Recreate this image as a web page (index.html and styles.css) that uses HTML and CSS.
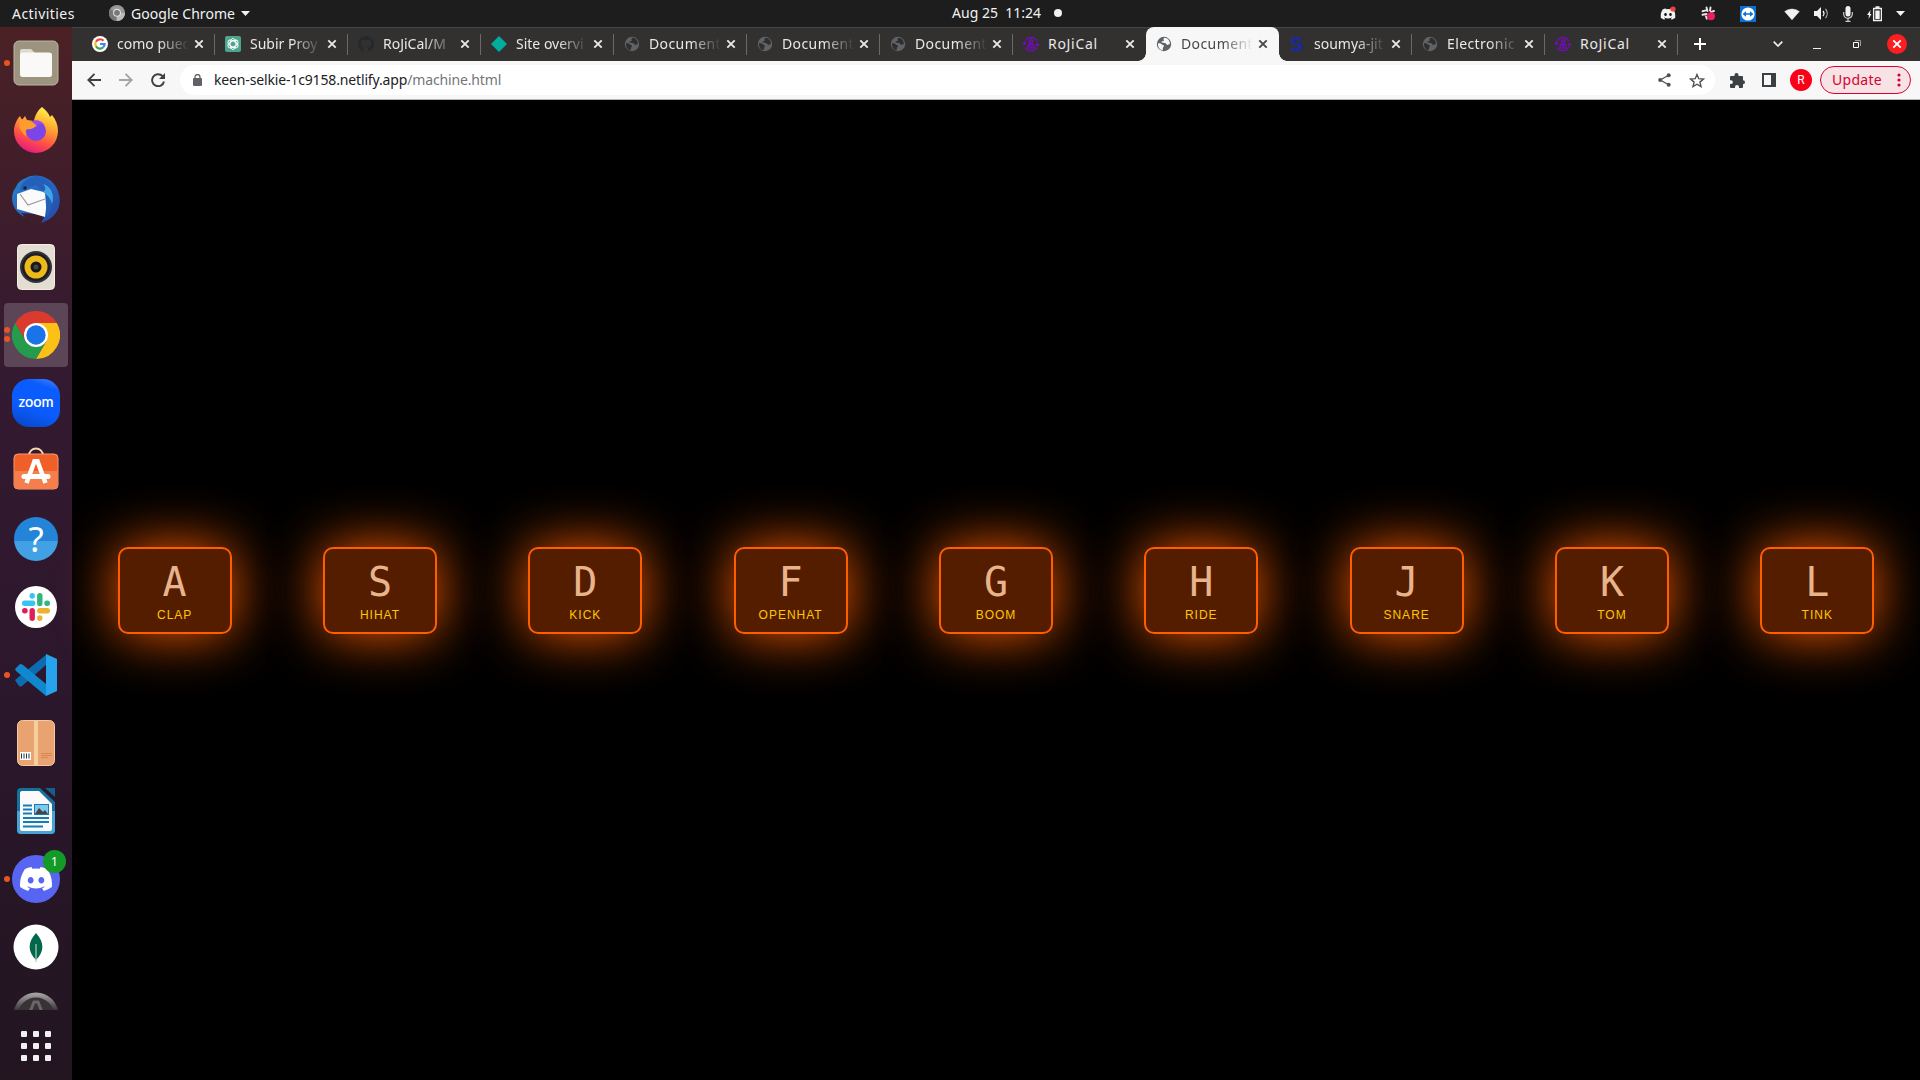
FILE: index.html
```html
<!DOCTYPE html>
<html lang="en">
<head>
<meta charset="utf-8">
<title>Drum machine</title>
<link rel="stylesheet" href="styles.css">
</head>
<body>
<svg class="defs" width="0" height="0">
  <defs>
    <symbol id="globe" viewBox="0 0 16 16"><circle cx="8" cy="8" r="7.200" fill="#5f6368"/><path class="land" d="M2 7.200c1.600-.2 3 .2 3.600 1 .8.9 2.100.5 2.300 1.500.2 1-1 1.300-1.100 2.500v2C3.900 14.100 1.700 11.500 2 7.200zM8.500 1.800c-1 .5-1.300 1.500-.7 2.200.6.6-.6 1.400-1.500 1.200-.9-.2-1 .9-.3 1.300 1 .6 2.200.2 3.200.6 1 .5 1 1.700 2 1.800.9.100 1.300-.7 2.600-.7.400-3.400-2-6.200-5.300-6.400z"/></symbol>
    <symbol id="x" viewBox="0 0 10 10"><path d="M1.300 1.300l7.400 7.400M8.700 1.300L1.300 8.700" stroke="currentColor" stroke-width="1.900" fill="none"/></symbol>
    <symbol id="roji" viewBox="0 0 16 16"><g fill="none" stroke="#8300d8" stroke-width="1.200"><path d="M2.300 4.800A6.600 6.600 0 0 1 13.700 4.800M13.700 11.500A6.600 6.600 0 0 1 2.300 11.500M1.200 9V6.500M14.800 7v2.500M0 8l1.200-1.800L3 8M13 8l1.800 1.800L16 8"/><circle cx="8" cy="5.500" r="1.700"/><path d="M5 12V10.500a3 2.200 0 0 1 6 0V12zM8 10v2"/></g></symbol>
    <symbol id="discord" viewBox="0 0 24 18"><path fill="currentColor" d="M20.300 1.500A20 20 0 0 0 15.400 0l-.7 1.300a18 18 0 0 0-5.400 0L8.600 0a20 20 0 0 0-4.900 1.500C.6 6.100-.3 10.600.1 15a20 20 0 0 0 6 3l1.300-2-2-1 .5-.4a14 14 0 0 0 12.200 0l.5.4-2 1 1.300 2a20 20 0 0 0 6-3c.5-5.100-.8-9.600-3.600-13.500zM8 12.300c-1.200 0-2.200-1.100-2.200-2.400s1-2.400 2.200-2.400 2.200 1.100 2.200 2.400-1 2.400-2.200 2.400zm8 0c-1.200 0-2.200-1.100-2.200-2.400s1-2.400 2.200-2.400 2.200 1.100 2.200 2.400-1 2.400-2.200 2.400z"/></symbol>
  </defs>
</svg>

<header class="topbar">
  <div class="topbar-left">
    <span class="activities">Activities</span>
    <svg class="app-icon" width="16" height="16" viewBox="0 0 16 16"><circle cx="8" cy="8" r="8" fill="#999"/><path d="M8 8L1 4a8 8 0 0 0 6 12z" fill="#777"/><path d="M8 8h8a8 8 0 0 1-8 8z" fill="#bbb"/><circle cx="8" cy="7.800" r="4" fill="#ddd"/><circle cx="8" cy="7.800" r="2.900" fill="#777"/></svg>
    <span class="app-name">Google Chrome</span>
    <svg width="9" height="5" viewBox="0 0 9 5"><path d="M0 0h9L4.500 5z" fill="#f2f2f2"/></svg>
  </div>
  <div class="clock"><span>Aug 25&nbsp; 11:24</span><i></i></div>
  <div class="tray">
    <svg width="17" height="15" viewBox="0 0 17 15"><g color="#f2f2f2"><use href="#discord" x="0.500" y="2" width="15" height="12"/></g><circle cx="13" cy="3" r="2.600" fill="#ed4245"/></svg>
    <svg width="15" height="15" viewBox="0 0 15 15"><g stroke="#e8e8e8" stroke-width="1.900" stroke-linecap="round"><path d="M5.500 1.500l1 3.500M9.500 1.500L9 4.500M1.500 5.200l3.500-.8M1.500 8.800L5.500 8M5 10.500l.8 2.200M10 5.800l3-.8"/></g><circle cx="10" cy="10.300" r="4" fill="#ec1e63"/></svg>
    <svg width="16" height="16" viewBox="0 0 16 16"><path fill="#0d6fd0" d="M0 0h16v16H0z"/><circle cx="8" cy="8" r="6.600" fill="#fff"/><path fill="#0d6fd0" d="M2.500 8l3.500-2.700v1.900h4V5.300L13.500 8 10 10.700V8.800H6v1.900z"/></svg>
    <svg class="wifi" width="16" height="12" viewBox="0 0 16 12"><path fill="#888" d="M0 3.500a12 12 0 0 1 16 0L8 12z"/><path fill="#f2f2f2" d="M.8 3.600a11 11 0 0 1 14.400 0L8 12z"/></svg>
    <svg width="15" height="13" viewBox="0 0 15 13"><path fill="#f2f2f2" d="M0 4h3l4-4v13L3 9H0z"/><path d="M9 4a4 4 0 0 1 0 5" stroke="#f2f2f2" stroke-width="1.300" fill="none"/><path d="M11.500 1.800a7.500 7.500 0 0 1 0 9.400" stroke="#aaa" stroke-width="1.300" fill="none"/></svg>
    <svg width="10" height="16" viewBox="0 0 10 16"><rect x="2.500" width="5" height="10.500" rx="2.500" fill="#f2f2f2"/><path d="M.7 6v2a4.300 4.300 0 0 0 8.600 0V6M5 12v4M2.500 15.400h5" stroke="#ccc" stroke-width="1.200" fill="none"/></svg>
    <svg width="15" height="16" viewBox="0 0 15 16"><path fill="#f2f2f2" d="M3.500 4L0 9h2l-.5 4L4.500 8H3z"/><path d="M6.600 2.500h7.800v12H6.600zM8.500 1h4" fill="none" stroke="#f2f2f2" stroke-width="1.300"/><path fill="#f2f2f2" d="M8.300 4.500h4.400v8.500H8.300z"/></svg>
    <svg width="9" height="5" viewBox="0 0 9 5"><path d="M0 0h9L4.500 5z" fill="#f2f2f2"/></svg>
  </div>
</header>

<div class="desktop">
  <nav class="dock">
    <div class="app running">
      <svg width="46" height="46" viewBox="0 0 46 46"><rect x="1" y="1" width="44" height="44" rx="5" fill="#9c947f" stroke="#bbb5a3"/><path d="M7 11q0-2 2-2h9l4 4h15q2 0 2 2v19q0 3-3 3H10q-3 0-3-3z" fill="#ddd9ce"/><rect x="7" y="12.500" width="32" height="24.500" rx="3" fill="#faf9f7"/></svg>
    </div>
    <div class="app">
      <svg class="lift" width="46" height="47" viewBox="0 0 46 47"><defs><linearGradient id="ff" x1=".7" y1="0" x2=".3" y2="1"><stop offset="0" stop-color="#fff44f"/><stop offset=".35" stop-color="#ffa930"/><stop offset=".7" stop-color="#ff4f45"/><stop offset="1" stop-color="#e31587"/></linearGradient></defs><path fill="url(#ff)" d="M29 1c4 3 7 7 8 10l2-2c4 5 6 10 6 16a22 22 0 0 1-44 0c0-6 3-12 6-15l2 4 3-4 2 4 7 1c1-6 4-11 8-14z"/><circle cx="23" cy="25" r="10" fill="#7a46e8"/><path fill="#9d4be6" d="M18 16c5-4 12-1 14 4-4-3-7-2-9 0z"/><path fill="#ff9c2e" d="M7 14c4-3 8 1 11 2 3 0 4 3 6 4-3 1-5 4-9 3-3 0-3 4-1 8C7 26 5 19 7 14z"/></svg>
    </div>
    <div class="app">
      <svg width="48" height="48" viewBox="0 0 48 48"><defs><linearGradient id="tb" x1="0" x2="1" y2="1"><stop offset="0" stop-color="#2685cf"/><stop offset="1" stop-color="#2745a8"/></linearGradient></defs><path fill="url(#tb)" d="M14 3C23-2 35 1 42 9c7 9 8 22 1 30-4 5-9 7-14 9l4-7c-9-3-18-2-24-3l4 4C-1 36-3 20 4 12c2-5 5-7 10-9z"/><path fill="#fafafa" d="M5 19l14-5 17 4-3 24-28-8z"/><path fill="#245fba" d="M33 18l-9-8-16 6c1-9 9-15 18-15 9 2 15 9 15 19 0 8-2 16-6 22z"/><path d="M8 19l8 11 17-6" fill="none" stroke="#999" stroke-width="1.200"/><path fill="#3fa4e4" d="M31 9c8 2 12 11 9 20-1-4-3-8-9-12 3-2 3-5 0-8z"/><circle cx="13" cy="13" r="1.800" fill="#222"/></svg>
    </div>
    <div class="app">
      <svg width="38" height="46" viewBox="0 0 38 46"><rect x=".5" y=".5" width="37" height="45" rx="4" fill="#e3ddd2" stroke="#f2eee7"/><circle cx="19" cy="23" r="16" fill="#33333d"/><circle cx="19" cy="23" r="14" fill="#1d1d24"/><circle cx="19" cy="23" r="11.500" fill="#edba19"/><circle cx="19" cy="23" r="5.500" fill="#18181b"/><circle cx="19" cy="23" r="2.500" fill="#444"/></svg>
    </div>
    <div class="app running two active">
      <svg width="48" height="48" viewBox="0 0 48 48"><path fill="#db3a2e" d="M3.200 12A24 24 0 0 1 44.800 12H24L13.600 30z"/><path fill="#fbc116" d="M44.800 12A24 24 0 0 1 24 48l10.400-18L24 12z"/><path fill="#269a4d" d="M3.200 12A24 24 0 0 0 24 48l10.400-18H13.600z"/><circle cx="24" cy="24" r="12" fill="#fff"/><circle cx="24" cy="24" r="9.700" fill="#1a73e8"/></svg>
    </div>
    <div class="app"><div class="zoom">zoom</div></div>
    <div class="app">
      <svg class="bag" width="46" height="43" viewBox="0 0 46 43"><path d="M16 9c0-10 14-10 14 0" fill="none" stroke="#f3d6ac" stroke-width="2"/><rect x="1" y="7" width="44" height="35" rx="4" fill="#f15f28" stroke="#f99a70"/><path fill="#f57e4c" d="M1.500 24h43v14q0 3.500-3 3.500h-37q-3 0-3-3.500z"/><path d="M22 13L13.500 36M24 13l8.500 23" stroke="#fff" stroke-width="4.500"/><path d="M11 29.500h24" stroke="#fff" stroke-width="5" stroke-linecap="round"/><path fill="#fff" d="M20 12h6l1 4h-8z"/></svg>
    </div>
    <div class="app"><div class="help">?</div></div>
    <div class="app">
      <svg width="42" height="42" viewBox="0 0 42 42"><circle cx="21" cy="21" r="21" fill="#fff"/><g stroke-width="5.400" stroke-linecap="round"><path stroke="#36c5f0" d="M9.700 17.200h8M17.200 9.700v.3"/><path stroke="#2eb67d" d="M24.800 9.700v7.800M32.300 17.200H32"/><path stroke="#ecb22e" d="M24.800 24.800h7.500M24.800 32.300V32"/><path stroke="#e01e5a" d="M17.200 24.800v7.500M9.700 24.800h.3"/></g></svg>
    </div>
    <div class="app running">
      <svg width="42" height="42" viewBox="0 0 42 42"><path fill="#0d6cb0" d="M0 26l4 6q2 1 3 0l25-22V0L0 26z"/><path fill="#0f88d0" d="M0 15l5-5q2 0 3 1l23 19v12L1 17z"/><path fill="#27a3ee" d="M31 0l11 5v32l-11 5z"/></svg>
    </div>
    <div class="app">
      <svg width="38" height="46" viewBox="0 0 38 46"><rect x=".5" y=".5" width="37" height="45" rx="5" fill="#e9a370" stroke="#f5caa3"/><path fill="#f3cf9d" d="M17 1h4v44h-4z"/><path fill="#fff" d="M3 32h11v8H3z"/><path d="M4.500 33.500v5M7 33.500v5M9.500 33.500v5M12 33.500v5" stroke="#333"/><path d="M24 33.500h11M24 35.500h11M24 37.500h7" stroke="#d4824c" stroke-width=".8"/></svg>
    </div>
    <div class="app">
      <svg width="38" height="46" viewBox="0 0 38 46"><path fill="#156f9f" d="M4 0h19l15 14v28q0 4-4 4H4q-4 0-4-4V4q0-4 4-4z"/><path fill="#47a5d5" d="M0 23h38v19q0 4-4 4H4q-4 0-4-4z"/><path fill="#fafafa" d="M5 3h17l13 13v25q0 2-2 2H5q-2 0-2-2V5q0-2 2-2z"/><path fill="#145f8c" d="M28 0h10v9z"/><path d="M6 17.500h9M6 21.500h9M6 25.500h9M6 30h26M6 34h26M6 38.500h20" stroke="#157cb5" stroke-width="1.800"/><path fill="#157cb5" d="M17 16h15v11H17z"/><path fill="#80c8ee" d="M18 17h13v9H18z"/><path fill="#444" d="M18 26l4-6 4 4 2-2 3 4z"/></svg>
    </div>
    <div class="app running">
      <div class="discord-badge"><svg width="32" height="24"><use href="#discord"/></svg></div>
      <span class="count">1</span>
    </div>
    <div class="app">
      <svg width="46" height="46" viewBox="0 0 46 46"><circle cx="23" cy="23" r="22.500" fill="#fff"/><path fill="#00684a" d="M23 9c9 10 8 19 0 27-8-8-9-17 0-27z"/><path d="M23 20v18" stroke="#b8c9bc" stroke-width="1.200"/></svg>
    </div>
    <div class="app clipped">
      <svg width="46" height="18" viewBox="0 0 46 18"><defs><linearGradient id="fd" x2="0" y2="1"><stop offset="0" stop-color="#aaa"/><stop offset=".4" stop-color="#3a3337"/></linearGradient></defs><circle cx="23" cy="23" r="22.500" fill="url(#fd)"/><circle cx="23" cy="24" r="18.500" fill="#383236"/><path d="M17 20l4-10h4l4 10" fill="none" stroke="#6a6568" stroke-width="3"/></svg>
    </div>
    <div class="show-apps"><i></i><i></i><i></i><i></i><i></i><i></i><i></i><i></i><i></i></div>
  </nav>

  <section class="browser">
    <div class="tabs">
      <div class="tab"><svg class="fav" viewBox="0 0 16 16"><circle cx="8" cy="8" r="8" fill="#fff"/><g fill="none" stroke-width="2.200"><path stroke="#ea4335" d="M3.900 5.700A4.700 4.700 0 0 1 11.500 4.800"/><path stroke="#fbbc05" d="M3.900 5.700a4.700 4.700 0 0 0 0 4.600"/><path stroke="#34a853" d="M3.900 10.300a4.700 4.700 0 0 0 7.300 1"/><path stroke="#4285f4" d="M11.200 11.300A4.700 4.700 0 0 0 12.600 8H8"/></g></svg><span>como pued</span><svg class="close"><use href="#x"/></svg></div>
      <div class="tab"><svg class="fav" viewBox="0 0 16 16"><rect width="16" height="16" rx="2" fill="#4fa58c"/><g fill="none" stroke="#fff" stroke-width=".9"><ellipse cx="8" cy="8" rx="2.900" ry="5.500"/><ellipse cx="8" cy="8" rx="2.900" ry="5.500" transform="rotate(60 8 8)"/><ellipse cx="8" cy="8" rx="2.900" ry="5.500" transform="rotate(120 8 8)"/></g></svg><span>Subir Proy</span><svg class="close"><use href="#x"/></svg></div>
      <div class="tab"><svg class="fav" viewBox="0 0 16 16"><path fill="#24292f" d="M8 0C3.580 0 0 3.580 0 8c0 3.540 2.290 6.530 5.470 7.590.4.070.55-.17.55-.38v-1.490c-2.010.37-2.530-.49-2.690-.94-.09-.23-.48-.94-.82-1.130-.28-.15-.68-.52-.01-.53.63-.01 1.080.58 1.230.82.72 1.210 1.870.87 2.330.66.070-.52.280-.87.510-1.070-1.780-.2-3.640-.89-3.640-3.950 0-.87.310-1.590.82-2.150-.08-.2-.36-1.020.08-2.120 0 0 .67-.21 2.200.82a7.600 7.600 0 0 1 4 0c1.530-1.040 2.200-.82 2.200-.82.440 1.100.160 1.920.080 2.120.510.560.820 1.270.820 2.150 0 3.070-1.870 3.750-3.650 3.950.290.250.540.730.540 1.480v2.200c0 .21.150.460.550.380A8 8 0 0 0 8 0z"/></svg><span>RoJiCal/M</span><svg class="close"><use href="#x"/></svg></div>
      <div class="tab"><svg class="fav" viewBox="0 0 16 16"><path fill="#00ad9f" d="M8 0l8 8-8 8-8-8z"/></svg><span>Site overvi</span><svg class="close"><use href="#x"/></svg></div>
      <div class="tab"><svg class="fav"><use href="#globe"/></svg><span class="wide">Document</span><svg class="close"><use href="#x"/></svg></div>
      <div class="tab"><svg class="fav"><use href="#globe"/></svg><span class="wide">Document</span><svg class="close"><use href="#x"/></svg></div>
      <div class="tab"><svg class="fav"><use href="#globe"/></svg><span class="wide">Document</span><svg class="close"><use href="#x"/></svg></div>
      <div class="tab before"><svg class="fav"><use href="#roji"/></svg><span class="short">RoJiCal</span><svg class="close"><use href="#x"/></svg></div>
      <div class="tab selected"><svg class="fav"><use href="#globe"/></svg><span class="wide">Document</span><svg class="close"><use href="#x"/></svg></div>
      <div class="tab"><b class="fav s">S</b><span>soumya-jit</span><svg class="close"><use href="#x"/></svg></div>
      <div class="tab"><svg class="fav"><use href="#globe"/></svg><span class="wide">Electronic</span><svg class="close"><use href="#x"/></svg></div>
      <div class="tab"><svg class="fav"><use href="#roji"/></svg><span class="short">RoJiCal</span><svg class="close"><use href="#x"/></svg></div>
      <svg class="new" width="12" height="12" viewBox="0 0 12 12"><path d="M6 0v12M0 6h12" stroke="#fff" stroke-width="2"/></svg>
      <div class="window">
        <svg width="10" height="6" viewBox="0 0 10 6"><path d="M.7.700L5 5 9.300.700" fill="none" stroke="#eee" stroke-width="1.700"/></svg>
        <svg width="8" height="6" viewBox="0 0 8 6"><path d="M0 5.500h8" stroke="#eee"/></svg>
        <svg width="8" height="8" viewBox="0 0 8 8"><path d="M.5 2.500h5v5h-5z" fill="none" stroke="#fff"/><path d="M2 .5h5.500V6" fill="none" stroke="#999"/></svg>
        <div class="quit"><svg width="10" height="10"><use href="#x"/></svg></div>
      </div>
    </div>

    <div class="toolbar">
      <div class="nav">
        <svg width="14" height="14" viewBox="0 0 14 14"><path d="M14 7H1.500M7.500.800L1.300 7l6.200 6.200" fill="none" stroke="#3c4043" stroke-width="1.900"/></svg>
        <svg width="14" height="14" viewBox="0 0 14 14"><path d="M0 7h12.500M6.500.800L12.700 7l-6.200 6.200" fill="none" stroke="#a5a5a7" stroke-width="1.900"/></svg>
        <svg width="14" height="14" viewBox="0 0 14 14"><path d="M11.600 3.200A6 6 0 1 0 13 8.500" fill="none" stroke="#3c4043" stroke-width="1.900"/><path fill="#3c4043" d="M14 0v6H8z"/></svg>
      </div>
      <div class="omnibox">
        <svg width="9" height="12" viewBox="0 0 9 12"><rect y="4" width="9" height="8" rx="1" fill="#5f6368"/><path d="M2 5V3a2.500 2.500 0 0 1 5 0v2" fill="none" stroke="#5f6368" stroke-width="1.300"/></svg>
        <span class="url">keen-selkie-1c9158.netlify.app<em>/machine.html</em></span>
        <svg class="share" width="13" height="14" viewBox="0 0 13 14"><path d="M10.700 2.200L2.200 7l8.500 4.800" fill="none" stroke="#505356" stroke-width="1.300"/><g fill="#505356"><circle cx="10.700" cy="2.200" r="2"/><circle cx="2.200" cy="7" r="2"/><circle cx="10.700" cy="11.800" r="2"/></g></svg>
        <svg width="16" height="15" viewBox="0 0 16 15"><path d="M8 1.500l1.800 4.200 4.600.4-3.500 3 1.100 4.500-4-2.400-4 2.400 1.100-4.500-3.500-3 4.600-.4z" fill="none" stroke="#505356" stroke-width="1.400"/></svg>
      </div>
      <svg class="puzzle" width="15" height="15" viewBox="0 0 15 15"><path fill="#3c4043" d="M0 4q0-1 1-1h3.500V2a2 2 0 0 1 4 0v1H12q1 0 1 1v3.200a2 2 0 0 1 0 4V14q0 1-1 1H9v-1a2 2 0 0 0-4 0v1H1q-1 0-1-1v-3h1a1.900 1.900 0 0 0 0-3.800H0z"/></svg>
      <svg class="panel" width="14" height="14" viewBox="0 0 14 14"><path d="M1 1h12v12H1z" fill="none" stroke="#3c4043" stroke-width="2"/><path fill="#3c4043" d="M9 1h4v12H9z"/></svg>
      <div class="avatar">R</div>
      <div class="update"><span>Update</span><svg width="4" height="14" viewBox="0 0 4 14"><g fill="#d9002f"><circle cx="2" cy="2" r="1.600"/><circle cx="2" cy="7" r="1.600"/><circle cx="2" cy="12" r="1.600"/></g></svg></div>
    </div>

    <main class="keys">
      <div class="key"><kbd>A</kbd><span>clap</span></div>
      <div class="key"><kbd>S</kbd><span>hihat</span></div>
      <div class="key"><kbd>D</kbd><span>kick</span></div>
      <div class="key"><kbd>F</kbd><span>openhat</span></div>
      <div class="key"><kbd>G</kbd><span>boom</span></div>
      <div class="key"><kbd>H</kbd><span>ride</span></div>
      <div class="key"><kbd>J</kbd><span>snare</span></div>
      <div class="key"><kbd>K</kbd><span>tom</span></div>
      <div class="key"><kbd>L</kbd><span>tink</span></div>
    </main>
  </section>
</div>
</body>
</html>
```
FILE: styles.css
```css
* { box-sizing: border-box; }
body {
  margin: 0;
  width: 1920px;
  height: 1080px;
  overflow: hidden;
  display: flex;
  flex-direction: column;
  background: #000;
  font-family: "Noto Sans", "Open Sans", sans-serif;
  font-size: 14px;
}
svg { display: block; flex: none; }
.defs { position: absolute; }
.topbar {
  flex: none;
  height: 27px;
  background: #1d1d1d;
  color: #f2f2f2;
  display: grid;
  grid-template-columns: 1fr auto 1fr;
  align-items: center;
}
.topbar-left { display: flex; align-items: center; padding: 0 0 1px 12px; }
.activities { width: 97px; letter-spacing: .45px; }
.app-name { margin: 0 5px 0 6px; width: 105px; white-space: nowrap; letter-spacing: .05px; }
.clock { display: flex; align-items: center; gap: 13px; padding: 0 0 2px 94px; }
.clock i { width: 8px; height: 8px; border-radius: 50%; background: #f2f2f2; }
.tray { display: flex; align-items: center; justify-content: flex-end; gap: 14px; padding-right: 15px; }
.tray svg:nth-child(1) { margin-right: 10px; }
.tray svg:nth-child(2) { margin-right: 10px; }
.tray .wifi { margin-left: 14px; }
.desktop { flex: 1; display: flex; min-height: 0; }

.dock {
  width: 72px;
  flex: none;
  background: linear-gradient(#4b2125, #351a30 30%, #2b172c 65%, #221520);
  display: flex;
  flex-direction: column;
  align-items: center;
  padding-top: 4px;
}
.app {
  width: 64px;
  height: 64px;
  flex: none;
  margin-bottom: 4px;
  border-radius: 4px;
  display: flex;
  align-items: center;
  justify-content: center;
  position: relative;
}
.lift { margin-bottom: 3px; }
.bag { margin-bottom: 6px; }
.app.active { background: #5b4557; }
.app.running::before {
  content: "";
  position: absolute;
  left: 0;
  top: 29px;
  width: 6px;
  height: 6px;
  border-radius: 50%;
  background: #e95420;
}
.app.two::before { top: 24px; box-shadow: 0 9px #e95420; }
.zoom {
  width: 48px;
  height: 48px;
  border-radius: 17px;
  background: linear-gradient(20deg, #0845c0, #0b5cff 40%, #0b5cff 80%, #4a86ff);
  color: #fff;
  font: 600 14.500px/46px Lato, sans-serif;
  text-align: center;
}
.help {
  width: 44px;
  height: 44px;
  border-radius: 50%;
  background: linear-gradient(#2384d8 54%, #41a1e4 54%);
  color: #fff;
  font-size: 35px;
  line-height: 43px;
  text-align: center;
}
.discord-badge {
  width: 48px;
  height: 48px;
  border-radius: 50%;
  background: #5865f2;
  color: #fff;
  display: flex;
  align-items: center;
  justify-content: center;
}
.count {
  position: absolute;
  left: 39px;
  top: 3px;
  width: 23px;
  height: 23px;
  border-radius: 50%;
  background: #149a26;
  color: #fff;
  font-size: 12px;
  line-height: 23px;
  text-align: center;
}
.app.clipped { height: 18px; margin: 9px 0 0; }
.show-apps { display: grid; grid-template-columns: repeat(3, 6px); gap: 6px; margin-top: 21px; }
.show-apps i { height: 6px; border-radius: 1px; background: #f2f0f0; }

.browser { flex: 1; min-width: 0; display: flex; flex-direction: column; }
.tabs {
  height: 34px;
  flex: none;
  display: flex;
  align-items: center;
  background: #333130;
  border-top: 1px solid #484644;
  padding-left: 10px;
}
.tab {
  --land: #302f2e;
  width: 133px;
  height: 33px;
  flex: none;
  display: flex;
  align-items: center;
  padding: 0 0 1px 10px;
  color: #e8e8e8;
  position: relative;
}
.tab::after {
  content: "";
  position: absolute;
  right: 0;
  top: 6px;
  width: 1px;
  height: 21px;
  background: #6a6968;
}
.tab.before::after { display: none; }
.fav { width: 16px; height: 16px; flex: none; }
.land { fill: var(--land); }
.s { color: #1a2a9c; font: 900 20px/16px "DejaVu Sans", sans-serif; text-align: center; }
.tab span {
  width: 76px;
  margin: 0 1px 0 9px;
  white-space: nowrap;
  line-height: 20px;
  -webkit-mask-image: linear-gradient(90deg, #000 42px, transparent 72px);
  mask-image: linear-gradient(90deg, #000 42px, transparent 72px);
}
.tab .wide { letter-spacing: .4px; }
.tab .short { letter-spacing: .7px; -webkit-mask-image: none; mask-image: none; }
.close { width: 10px; height: 10px; }
.tab.selected { --land: #f7f7f7; background: #f7f7f7; border-radius: 8px 8px 0 0; color: #45474a; height: 34px; margin-top: -1px; padding-bottom: 0; }
.tab.selected::before, .tab.selected::after {
  content: "";
  position: absolute;
  top: auto;
  bottom: 0;
  width: 8px;
  height: 8px;
}
.tab.selected::before { left: -8px; background: radial-gradient(circle at 0 0, transparent 7.500px, #f7f7f7 8px); }
.tab.selected::after { right: -8px; background: radial-gradient(circle at 100% 0, transparent 7.500px, #f7f7f7 8px); }
.new { margin: 0 0 1px 16px; }
.window { margin-left: auto; display: flex; align-items: center; padding: 0 13px 1px 0; }
.window > svg:nth-child(1) { margin-right: 34px; margin-right: 30px; }
.window > svg:nth-child(2) { margin: 4px 32px 0 0; }
.window > svg:nth-child(3) { margin-right: 26px; }
.quit { width: 20px; height: 20px; border-radius: 50%; background: #fb1f22; color: #fff; display: flex; align-items: center; justify-content: center; }

.toolbar {
  height: 39px;
  flex: none;
  background: #f7f7f7;
  border-bottom: 1px solid #b8b8b8;
  display: flex;
  align-items: center;
  padding: 0 9px 0 15px;
}
.nav { display: flex; gap: 18px; }
.omnibox {
  flex: 1;
  height: 30px;
  border-radius: 15px;
  background: #fff;
  margin-left: 15px;
  padding: 0 10px 0 13px;
  display: flex;
  align-items: center;
}
.url { margin-left: 12px; padding-bottom: 2px; letter-spacing: -.15px; color: #202124; white-space: nowrap; }
.url em { font-style: normal; color: #73767a; }
.share { margin-left: auto; margin-right: 18px; }
.puzzle { margin-left: 15px; }
.panel { margin: 0 14px 0 17px; }
.avatar { width: 22px; height: 22px; border-radius: 50%; background: #fb0019; color: #fff; font: 12px/22px Roboto, sans-serif; text-align: center; }
.update {
  width: 91px;
  height: 28px;
  margin-left: 8px;
  border: 1px solid #d9002f;
  border-radius: 14px;
  background: #f7e3e6;
  color: #d9002f;
  display: flex;
  align-items: center;
  justify-content: space-between;
  padding: 0 9px 0 11px;
}
.update span { padding-bottom: 2px; letter-spacing: .3px; }

.keys { flex: 1; display: flex; align-items: center; justify-content: space-around; }
.key {
  width: 114px;
  height: 87px;
  border: 2px solid #ff5e00;
  border-radius: 10px;
  background: #541d00;
  box-shadow: 0 0 56px #ff5e00;
  text-align: center;
  padding-top: 9px;
}
.key kbd { display: block; font: 40px/49px "DejaVu Sans Mono", monospace; color: #e8b48c; }
.key span { display: block; font: 12px/16px "Liberation Sans", Arial, sans-serif; letter-spacing: 1px; text-transform: uppercase; color: #ffc600; }
```
